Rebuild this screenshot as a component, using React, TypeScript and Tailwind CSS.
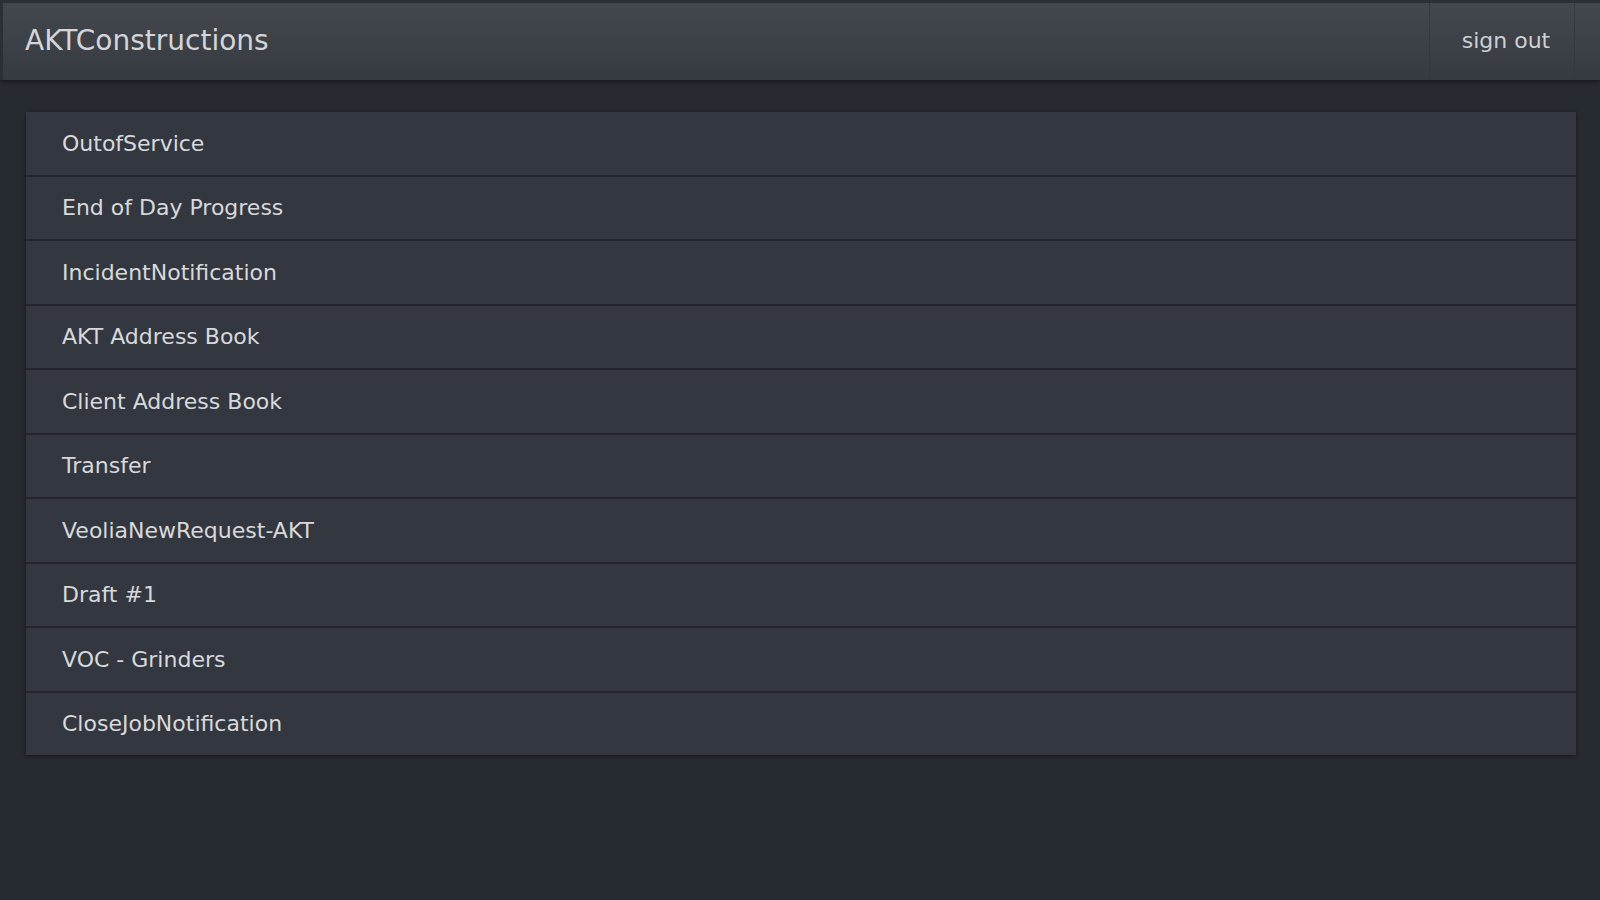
// App.tsx

import React from 'react'

const forms = [
  'OutofService',
  'End of Day Progress',
  'IncidentNotification',
  'AKT Address Book',
  'Client Address Book',
  'Transfer',
  'VeoliaNewRequest-AKT',
  'Draft #1',
  'VOC - Grinders',
  'CloseJobNotification',
]

const App = () => {
  return (
    <div className="min-h-[900px] w-full bg-[#262a31] font-['DejaVu_Sans',sans-serif] text-[#d8d9db]">
      <header className="flex h-[80px] items-stretch border-t-[3px] border-l-[3px] border-[#2b2f36] bg-gradient-to-b from-[#43484f] to-[#363a41] shadow-[0_2px_3px_rgba(0,0,0,0.35)]">
        <h1 className="flex flex-1 items-center pl-[22px] pb-[2px] text-[28px] text-[#d4d5d7]">AKTConstructions</h1>
        <button className="w-[146px] border-x border-[#34383f] pl-[8px] pb-[2px] text-[22px] text-[#cfd0d2]">sign out</button>
        <div className="w-[25px]" />
      </header>

      <div className="ml-[26px] mr-[24px] mt-[32px] flex flex-col shadow-[0_1px_4px_rgba(0,0,0,0.45)]">
        {forms.map((name) => (
          <div
            key={name}
            className="flex h-[64.5px] items-center border-b-2 border-[#22262c] bg-[#333840] pl-[36px] text-[22px] last:h-[62.5px] last:border-b-0"
          >
            {name}
          </div>
        ))}
      </div>
    </div>
  )
}

export default App
